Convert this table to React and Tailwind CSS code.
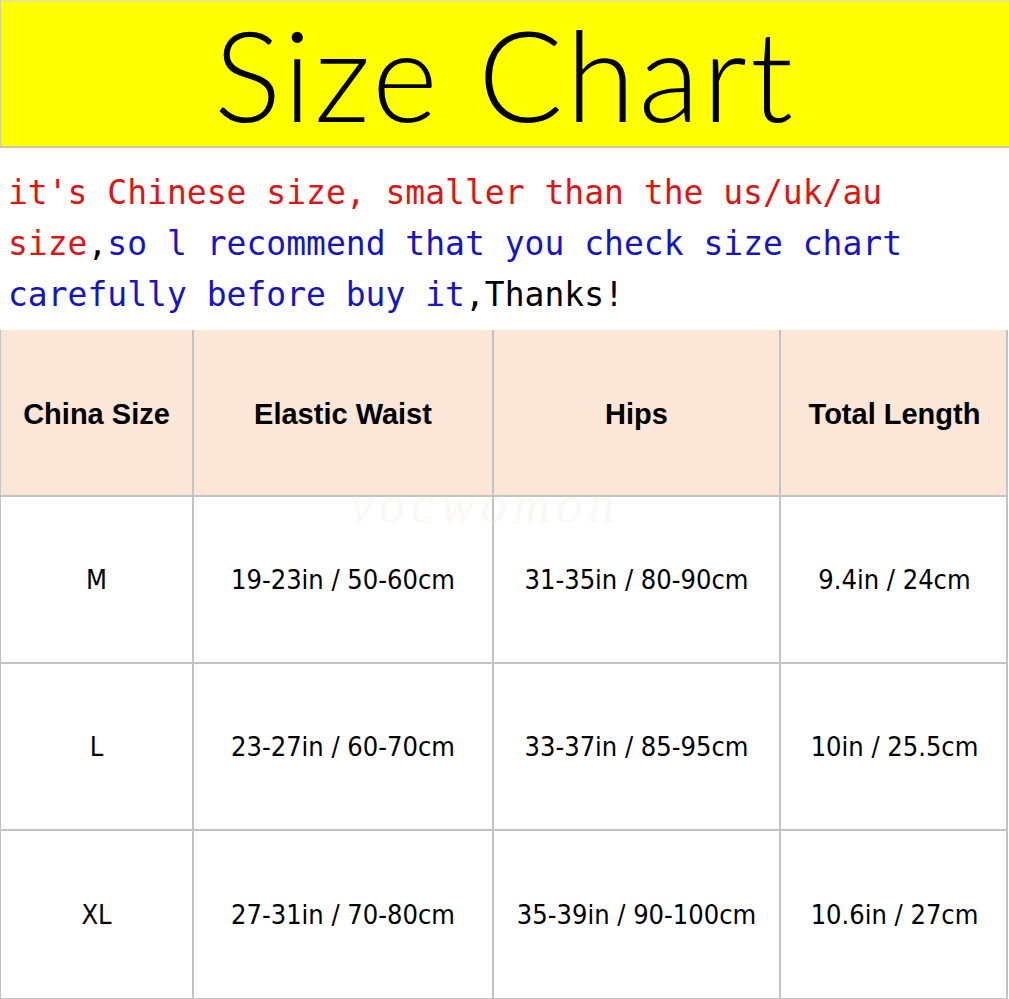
export default function App() {
  const rows = [
    ["M", "19-23in / 50-60cm", "31-35in / 80-90cm", "9.4in / 24cm"],
    ["L", "23-27in / 60-70cm", "33-37in / 85-95cm", "10in / 25.5cm"],
    ["XL", "27-31in / 70-80cm", "35-39in / 90-100cm", "10.6in / 27cm"],
  ];
  const cols = "grid grid-cols-[193px_300px_287px_227px]";
  const mono = { fontFamily: '"DejaVu Sans Mono", "Liberation Mono", monospace' };
  return (
    <div className="w-[1009px] h-[999px] bg-white relative overflow-hidden">
      <div className="h-[148px] bg-[#ffff00] border-t-2 border-t-[#e6e68a] border-b-2 border-b-[#c9c9a8] border-l border-l-[#d0d0a0] flex items-center justify-center">
        <div
          className="text-[126px] leading-[130px] text-black tracking-[3px]"
          style={{ fontFamily: '"Lato", "Open Sans", sans-serif', fontWeight: 300 }}
        >
          Size Chart
        </div>
      </div>
      <div className="h-[182px] pl-[8px] pt-[19px] text-[33px] leading-[51px] whitespace-pre" style={mono}>
        <div className="text-[#e01414]">it's Chinese size, smaller than the us/uk/au</div>
        <div>
          <span className="text-[#e01414]">size</span>
          <span className="text-black">,</span>
          <span className="text-[#1414c8]">so l recommend that you check size chart</span>
        </div>
        <div>
          <span className="text-[#1414c8]">carefully before buy it</span>
          <span className="text-black">,Thanks!</span>
        </div>
      </div>
      <div className="w-[1008px] border-l border-r-2 border-b-2 border-[#c3c3c3]">
        <div className={`${cols} h-[167px] bg-[#fbe6d8] border-b-2 border-[#c3c3c3]`}>
          {["China Size", "Elastic Waist", "Hips", "Total Length"].map((h, i) => (
            <div
              key={h}
              className={`flex items-center justify-center pt-[4px] text-[29px] font-bold text-black ${i < 3 ? "border-r-2 border-[#c3c3c3]" : ""}`}
              style={{ fontFamily: '"Liberation Sans", Arial, sans-serif' }}
            >
              {h}
            </div>
          ))}
        </div>
        {rows.map((r, ri) => (
          <div key={ri} className={`${cols} h-[167px] ${ri < 2 ? "border-b-2 border-[#c3c3c3]" : ""}`}>
            {r.map((c, i) => (
              <div
                key={i}
                className={`flex items-center justify-center pt-[2px] text-[27px] text-black ${i < 3 ? "border-r-2 border-[#c3c3c3]" : ""}`}
                style={{ fontFamily: '"DejaVu Sans Condensed", "DejaVu Sans", sans-serif' }}
              >
                {c}
              </div>
            ))}
          </div>
        ))}
      </div>
      <div
        className="absolute left-[350px] top-[466px] text-[52px] italic text-[#f3e2d6] tracking-[6px] pointer-events-none opacity-25"
        style={{ fontFamily: '"Liberation Serif", serif' }}
      >
        vocwomon
      </div>
    </div>
  );
}
